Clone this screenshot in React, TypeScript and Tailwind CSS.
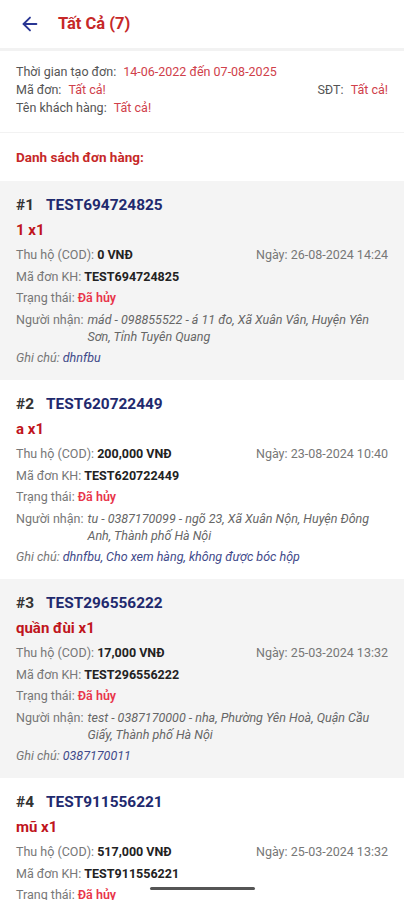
import { ArrowLeft } from "lucide-react";

type Order = {
  no: number;
  code: string;
  item: string;
  cod: string;
  date: string;
  receiver: string;
  note: string;
};

const orders: Order[] = [
  {
    no: 1,
    code: "TEST694724825",
    item: "1 x1",
    cod: "0 VNĐ",
    date: "26-08-2024 14:24",
    receiver: "mád - 098855522 - á 11 đo, Xã Xuân Vân, Huyện Yên Sơn, Tỉnh Tuyên Quang",
    note: "dhnfbu",
  },
  {
    no: 2,
    code: "TEST620722449",
    item: "a x1",
    cod: "200,000 VNĐ",
    date: "23-08-2024 10:40",
    receiver: "tu - 0387170099 - ngõ 23, Xã Xuân Nộn, Huyện Đông Anh, Thành phố Hà Nội",
    note: "dhnfbu, Cho xem hàng, không được bóc hộp",
  },
  {
    no: 3,
    code: "TEST296556222",
    item: "quần đùi x1",
    cod: "17,000 VNĐ",
    date: "25-03-2024 13:32",
    receiver: "test - 0387170000 - nha, Phường Yên Hoà, Quận Cầu Giấy, Thành phố Hà Nội",
    note: "0387170011",
  },
  {
    no: 4,
    code: "TEST911556221",
    item: "mũ x1",
    cod: "517,000 VNĐ",
    date: "25-03-2024 13:32",
    receiver: "test - 0387170000 - nha, Phường Yên Hoà, Quận Cầu Giấy, Thành phố Hà Nội",
    note: "0387170011",
  },
];

const OrderCard = ({ order, shaded }: { order: Order; shaded: boolean }) => {
  return (
    <div className={`px-4 pt-[14px] pb-[14px] ${shaded ? "bg-[#f4f4f4]" : "bg-white"}`}>
      {/* Header */}
      <div className="flex items-center gap-3 text-[15.4px] font-bold leading-5">
        <span className="text-[#333]">#{order.no}</span>
        <span className="text-[#1f2a6e]">{order.code}</span>
      </div>
      <div className="mt-[5px] text-[15px] font-bold leading-5 text-[#c0141c]">{order.item}</div>
      {/* Details */}
      <div className="mt-[6px] flex flex-col gap-[4.5px] text-[12.5px] leading-[17px] text-[#777]">
        <div className="flex items-center justify-between">
          <p>
            Thu hộ (COD): <span className="font-bold text-[#222]">{order.cod}</span>
          </p>
          <p>Ngày: {order.date}</p>
        </div>
        <p>
          Mã đơn KH: <span className="font-bold text-[#222]">{order.code}</span>
        </p>
        <p>
          Trạng thái: <span className="font-semibold text-[#e8354a]">Đã hủy</span>
        </p>
        <div className="flex">
          <span className="shrink-0 pr-1">Người nhận:</span>
          <span className="flex-1 italic text-[#666] pr-3">{order.receiver}</span>
        </div>
        <p className="italic">
          Ghi chú: <span className="text-[#3f4a8a]">{order.note}</span>
        </p>
      </div>
    </div>
  );
};

const App = () => {
  return (
    <div className="relative h-[900px] w-[404px] overflow-hidden bg-white font-['Roboto',sans-serif]">
      {/* Top bar */}
      <div className="flex h-[51px] items-center border-b-[3px] border-[#f2f2f2]">
        <div className="flex w-[58px] justify-center pl-[1px]">
          <ArrowLeft size={22} strokeWidth={2} className="text-[#283593]" />
        </div>
        <h1 className="text-[16.5px] font-bold text-[#c62828]">Tất Cả (7)</h1>
      </div>

      {/* Filters */}
      <div className="border-b border-[#f2f2f2] px-4 pt-3 pb-[15px] text-[12.5px] leading-[18px] text-[#555]">
        <p>
          Thời gian tạo đơn: <span className="ml-1 text-[#d0404a]">14-06-2022 đến 07-08-2025</span>
        </p>
        <div className="flex justify-between">
          <p>
            Mã đơn: <span className="ml-1 text-[#d0404a]">Tất cả!</span>
          </p>
          <p>
            SĐT: <span className="ml-1 text-[#d0404a]">Tất cả!</span>
          </p>
        </div>
        <p>
          Tên khách hàng: <span className="ml-1 text-[#d0404a]">Tất cả!</span>
        </p>
      </div>

      {/* List title */}
      <div className="flex h-12 items-center px-4">
        <h2 className="text-[13.5px] font-bold text-[#c62828]">Danh sách đơn hàng:</h2>
      </div>

      {/* Orders */}
      <div>
        {orders.map((o, i) => (
          <OrderCard key={o.no} order={o} shaded={i % 2 === 0} />
        ))}
      </div>

      {/* Gesture bar */}
      <div className="absolute bottom-[10px] left-[150px] h-[3px] w-[105px] rounded-full bg-[#555]" />
    </div>
  );
};

export default App;
